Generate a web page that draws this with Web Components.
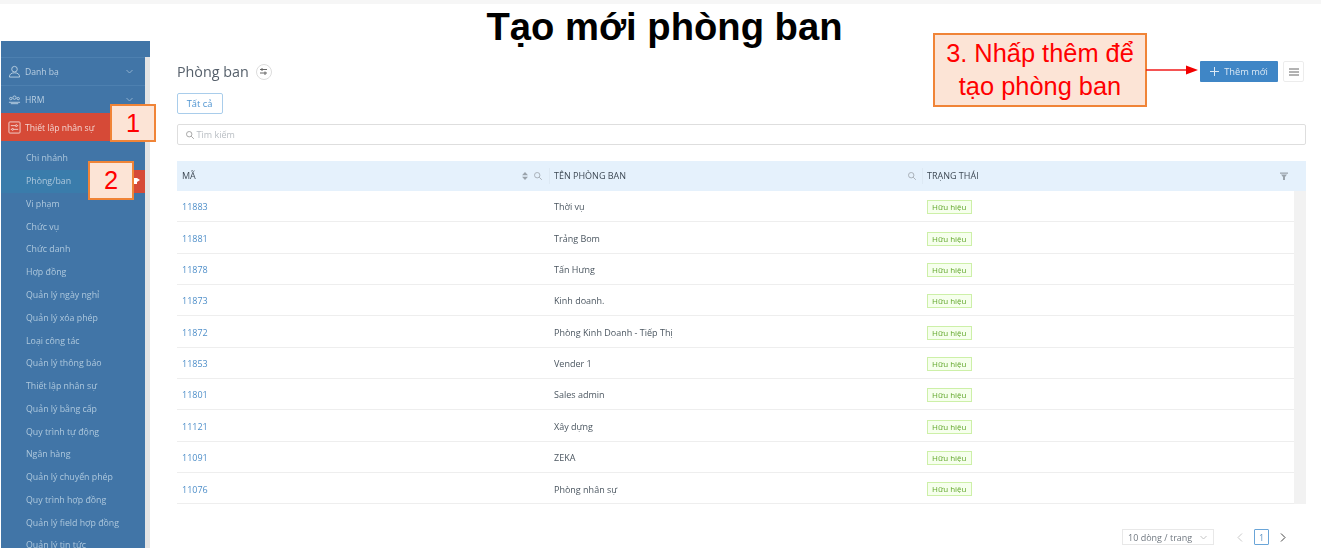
<!DOCTYPE html>
<html lang="vi">
<head>
<meta charset="utf-8">
<title>Tạo mới phòng ban</title>
<style>
    html, body { margin: 0; padding: 0; background: #fff; }
    body { width: 1321px; height: 557px; overflow: hidden; font-family: "Open Sans", "Noto Sans", sans-serif; }
</style>
</head>
<body>
<slide-page>
    <side-nav slot="nav">
        <nav-group icon="user" label="Danh bạ"></nav-group>
        <nav-group icon="team" label="HRM"></nav-group>
        <nav-group icon="sliders" label="Thiết lập nhân sự" active></nav-group>
        <nav-link>Chi nhánh</nav-link>
        <nav-link current>Phòng/ban</nav-link>
        <nav-link>Vi phạm</nav-link>
        <nav-link>Chức vụ</nav-link>
        <nav-link>Chức danh</nav-link>
        <nav-link>Hợp đồng</nav-link>
        <nav-link>Quản lý ngày nghỉ</nav-link>
        <nav-link>Quản lý xóa phép</nav-link>
        <nav-link>Loại công tác</nav-link>
        <nav-link>Quản lý thông báo</nav-link>
        <nav-link>Thiết lập nhân sự</nav-link>
        <nav-link>Quản lý bằng cấp</nav-link>
        <nav-link>Quy trình tự động</nav-link>
        <nav-link>Ngân hàng</nav-link>
        <nav-link>Quản lý chuyển phép</nav-link>
        <nav-link>Quy trình hợp đồng</nav-link>
        <nav-link>Quản lý field hợp đồng</nav-link>
        <nav-link>Quản lý tin tức</nav-link>
    </side-nav>
    <page-head></page-head>
    <search-box></search-box>
    <data-table>
        <table-row code="11883" name="Thời vụ"></table-row>
        <table-row code="11881" name="Trảng Bom"></table-row>
        <table-row code="11878" name="Tấn Hưng"></table-row>
        <table-row code="11873" name="Kinh doanh."></table-row>
        <table-row code="11872" name="Phòng Kinh Doanh - Tiếp Thị"></table-row>
        <table-row code="11853" name="Vender 1"></table-row>
        <table-row code="11801" name="Sales admin"></table-row>
        <table-row code="11121" name="Xây dựng"></table-row>
        <table-row code="11091" name="ZEKA"></table-row>
        <table-row code="11076" name="Phòng nhân sự"></table-row>
    </data-table>
    <table-pager></table-pager>

    <call-out slot="over" style="left:110px;top:104px;width:46px;height:38px">1</call-out>
    <call-out slot="over" style="left:88px;top:161px;width:46px;height:39px">2</call-out>
    <call-out slot="over" style="left:933px;top:33px;width:214px;height:74px">3. Nhấp thêm để<br>tạo phòng ban</call-out>
    <svg slot="over" style="position:absolute;left:1146px;top:62px" width="54" height="16" viewBox="0 0 54 16">
        <path d="M0 8H42" stroke="#f01a1a" stroke-width="1.4"/>
        <path d="M40 3.6L52 8L40 12.4Z" fill="#f20000"/>
    </svg>
</slide-page>

<script>
class SlidePage extends HTMLElement {
    constructor() {
        super();
        this.attachShadow({ mode: 'open' });
        this.shadowRoot.innerHTML = `
            <style>
                :host {
                    display: block;
                    position: relative;
                    width: 1321px;
                    height: 557px;
                    overflow: hidden;
                    color: #3d4a55;
                }
                h1 {
                    margin: 0;
                    height: 41px;
                    padding: 4px 0 0 8px;
                    box-sizing: border-box;
                    font: bold 38.2px/45px "Liberation Sans", Arial, sans-serif;
                    color: #000;
                    text-align: center;
                    white-space: nowrap;
                    background: linear-gradient(#f6f6f6 0 4px, #fff 4px);
                }
                .body {
                    display: flex;
                    align-items: flex-start;
                }
                .main {
                    flex: 1;
                    min-width: 0;
                    padding: 0 15px 0 26.5px;
                    filter: blur(0.3px);
                }
            </style>
            <h1>Tạo mới phòng ban</h1>
            <div class="body">
                <slot name="nav"></slot>
                <div class="main"><slot></slot></div>
            </div>
            <slot name="over"></slot>
        `;
    }
}

class SideNav extends HTMLElement {
    constructor() {
        super();
        this.attachShadow({ mode: 'open' });
        this.shadowRoot.innerHTML = `
            <style>
                :host {
                    display: flex;
                    flex: none;
                    width: 149px;
                    margin-left: 1px;
                    height: 507px;
                    flex-direction: column;
                    overflow: hidden;
                    background: linear-gradient(#4175a7 0 16px, #e4e4e4 16px);
                    font: 8.8px "Open Sans", sans-serif;
                    filter: blur(0.3px);
                }
                .top { height: 16px; flex: none; }
                .list {
                    width: 144px;
                    flex: 1;
                    min-height: 0;
                    overflow: hidden;
                    background: #4175a7;
                }
            </style>
            <div class="top"></div>
            <div class="list"><slot></slot></div>
        `;
    }
}

const NAV_ICONS = {
    user: '<circle cx="7" cy="4.5" r="3"/><path d="M1.5 13c0-3 2-4.6 5.5-4.6s5.5 1.6 5.5 4.600z"/>',
    team: '<circle cx="7" cy="5" r="1.8"/><circle cx="3" cy="6" r="1.3"/><circle cx="11" cy="6" r="1.3"/><path d="M1 10h12M3 11.5h8"/>',
    sliders: '<rect x="1" y="1" width="12" height="12" rx="1"/><path d="M3 5h5M10 5h1M3 9h1M6 9h5"/><circle cx="9" cy="5" r="1"/><circle cx="5" cy="9" r="1"/>'
};

class NavGroup extends HTMLElement {
    constructor() {
        super();
        this.attachShadow({ mode: 'open' });
    }

    connectedCallback() {
        const active = this.hasAttribute('active');
        this.shadowRoot.innerHTML = `
            <style>
                :host {
                    display: flex;
                    align-items: center;
                    height: 28px;
                    box-sizing: border-box;
                    border-top: 1px solid #4d80b0;
                    padding: 0 12px 0 7px;
                    color: #b9cfe2;
                    font-size: 8.6px;
                }
                :host([active]) {
                    background: #d64a37;
                    border-top-color: #d64a37;
                    color: #f3d5d0;
                }
                svg.icon {
                    width: 13px;
                    height: 13px;
                    margin-right: 4px;
                    flex: none;
                    fill: none;
                    stroke: currentColor;
                    stroke-width: 1;
                }
                span { flex: 1; white-space: nowrap; }
                svg.chev {
                    width: 7px;
                    height: 5px;
                    fill: none;
                    stroke: #8fb0cd;
                    stroke-width: 1;
                }
            </style>
            <svg class="icon" viewBox="0 0 14 14">${NAV_ICONS[this.getAttribute('icon')]}</svg>
            <span>${this.getAttribute('label')}</span>
            ${active ? '' : '<svg class="chev" viewBox="0 0 7 5"><path d="M.5 1l3 3 3-3"/></svg>'}
        `;
    }
}

class NavLink extends HTMLElement {
    constructor() {
        super();
        this.attachShadow({ mode: 'open' });
        this.shadowRoot.innerHTML = `
            <style>
                :host {
                    display: flex;
                    align-items: center;
                    height: 22.77px;
                    padding-left: 25px;
                    color: #aec8dd;
                    white-space: nowrap;
                }
                :host(:first-of-type) { margin-top: 6px; }
                :host([current]) {
                    background: linear-gradient(90deg, #3a7cab 0 132px, #d64a37 132px);
                    position: relative;
                }
                :host([current])::after {
                    content: "";
                    position: absolute;
                    left: 133px;
                    top: 8px;
                    width: 3px;
                    height: 6px;
                    background: #fff;
                }
                :host([current])::before {
                    content: "";
                    position: absolute;
                    left: 136px;
                    top: 8.5px;
                    border: 2.5px solid transparent;
                    border-left: 3px solid #fff;
                    border-right: 0;
                }
            </style>
            <slot></slot>
        `;
    }
}

class PageHead extends HTMLElement {
    constructor() {
        super();
        this.attachShadow({ mode: 'open' });
        this.shadowRoot.innerHTML = `
            <style>
                :host { display: block; font-family: "Open Sans", sans-serif; }
                .row {
                    display: flex;
                    align-items: center;
                    height: 21px;
                    padding-top: 20px;
                }
                h2 {
                    margin: 0;
                    padding-left: .5px;
                    font-size: 14.3px;
                    font-weight: 400;
                    color: #56606b;
                }
                .tune {
                    width: 16px;
                    height: 16px;
                    margin-left: 7px;
                    border: 1px solid #dcdcdc;
                    border-radius: 50%;
                    box-sizing: border-box;
                    display: flex;
                    align-items: center;
                    justify-content: center;
                }
                .tune svg { width: 9px; height: 9px; stroke: #666; fill: none; stroke-width: 1; }
                .add {
                    margin-left: auto;
                    width: 78px;
                    height: 21px;
                    box-sizing: border-box;
                    background: #3f86c6;
                    border-radius: 1px;
                    color: #dbe9f5;
                    font-size: 9.3px;
                    display: flex;
                    align-items: center;
                    justify-content: center;
                    gap: 5px;
                }
                .add svg { width: 9px; height: 9px; stroke: #dbe9f5; stroke-width: 1; }
                .menu {
                    width: 21px;
                    height: 21px;
                    margin: 0 2px 0 5px;
                    box-sizing: border-box;
                    border: 1px solid #ececec;
                    border-radius: 2px;
                    display: flex;
                    align-items: center;
                    justify-content: center;
                }
                .menu svg { width: 10px; height: 8px; stroke: #666; stroke-width: 1; }
                .all {
                    display: flex;
                    align-items: center;
                    justify-content: center;
                    box-sizing: border-box;
                    width: 46px;
                    height: 21px;
                    margin-top: 11px;
                    border: 1px solid #a9cdeb;
                    border-radius: 2px;
                    color: #4d93d0;
                    font-size: 9.3px;
                }
            </style>
            <div class="row">
                <h2>Phòng ban</h2>
                <span class="tune"><svg viewBox="0 0 9 9"><path d="M1 2.5h7M1 6h7M3 1v3M6 4.5V8"/></svg></span>
                <span class="add"><svg viewBox="0 0 9 9"><path d="M4.5 0v9M0 4.5h9"/></svg>Thêm mới</span>
                <span class="menu"><svg viewBox="0 0 10 8"><path d="M0 1h10M0 4h10M0 7h10"/></svg></span>
            </div>
            <div class="all">Tất cả</div>
        `;
    }
}

class SearchBox extends HTMLElement {
    constructor() {
        super();
        this.attachShadow({ mode: 'open' });
        this.shadowRoot.innerHTML = `
            <style>
                :host {
                    display: flex;
                    align-items: center;
                    height: 21px;
                    margin-top: 10px;
                    padding-left: 8px;
                    box-sizing: border-box;
                    border: 1px solid #dedede;
                    border-radius: 2px;
                    color: #b9bec3;
                    font: 9px "Open Sans", sans-serif;
                }
                svg { width: 8px; height: 8px; margin-right: 3px; fill: none; stroke: #a8a8a8; stroke-width: 1; }
            </style>
            <svg viewBox="0 0 8 8"><circle cx="3.2" cy="3.2" r="2.7"/><path d="M5.2 5.2L7.8 7.8"/></svg>
            <span>Tìm kiếm</span>
        `;
    }
}

class DataTable extends HTMLElement {
    constructor() {
        super();
        this.attachShadow({ mode: 'open' });
        this.shadowRoot.innerHTML = `
            <style>
                :host {
                    display: block;
                    margin-top: 16px;
                    font: 9px "Open Sans", sans-serif;
                }
                .head {
                    display: grid;
                    grid-template-columns: 372px 373px 1fr;
                    height: 30px;
                    background: #e5f1fc;
                    color: #3f4a55;
                }
                .cell {
                    display: flex;
                    align-items: center;
                    padding: 0 6px 1px 5.5px;
                    gap: 6px;
                    position: relative;
                }
                .cell b { font-weight: 400; flex: 1; }
                .cell svg { width: 8px; height: 8px; fill: none; stroke: #aab2ba; stroke-width: 1; }
                .cell svg.solid { fill: #9aa3ab; stroke: none; }
                .cell + .cell::before {
                    content: "";
                    position: absolute;
                    left: 0;
                    top: 7px;
                    bottom: 7px;
                    width: 1px;
                    background: #dde9f4;
                }
                .cell.first { padding-right: 7px; }
                .cell.last { padding-right: 18px; }
                .rows { display: flex; }
                .list { flex: 1; min-width: 0; }
                .bar { width: 12px; flex: none; background: #f2f2f2; }
            </style>
            <div class="head">
                <div class="cell first">
                    <b>MÃ</b>
                    <svg class="solid" viewBox="0 0 6 8" style="width:6px"><path d="M3 0l3 3.2H0zM3 8L0 4.8h6z"/></svg>
                    <svg viewBox="0 0 8 8"><circle cx="3.2" cy="3.2" r="2.7"/><path d="M5.2 5.2L7.8 7.8"/></svg>
                </div>
                <div class="cell">
                    <b>TÊN PHÒNG BAN</b>
                    <svg viewBox="0 0 8 8"><circle cx="3.2" cy="3.2" r="2.7"/><path d="M5.2 5.2L7.8 7.8"/></svg>
                </div>
                <div class="cell last">
                    <b>TRẠNG THÁI</b>
                    <svg class="solid" viewBox="0 0 8 8"><path d="M0 .5h8v1.2H0zM1 2.6h6L5 5v3H3V5z"/></svg>
                </div>
            </div>
            <div class="rows">
                <div class="list"><slot></slot></div>
                <div class="bar"></div>
            </div>
        `;
    }
}

class TableRow extends HTMLElement {
    constructor() {
        super();
        this.attachShadow({ mode: 'open' });
    }

    connectedCallback() {
        this.shadowRoot.innerHTML = `
            <style>
                :host {
                    display: grid;
                    grid-template-columns: 372px 373px 1fr;
                    align-items: center;
                    height: 31.35px;
                    padding-top: 1.5px;
                    box-sizing: border-box;
                    border-bottom: 1px solid #eeeeee;
                    font-size: 9px;
                    color: #4b5660;
                }
                div { padding-left: 5.5px; }
                .code { color: #4f8fc9; }
                .tag {
                    display: inline-block;
                    height: 14px;
                    line-height: 12px;
                    padding: 0 4px;
                    box-sizing: border-box;
                    border: 1px solid #cdf0a8;
                    background: #f6ffed;
                    color: #63a82e;
                    font-size: 8px;
                    white-space: nowrap;
                    vertical-align: middle;
                }
            </style>
            <div class="code">${this.getAttribute('code')}</div>
            <div>${this.getAttribute('name')}</div>
            <div><span class="tag">Hữu hiệu</span></div>
        `;
    }
}

class TablePager extends HTMLElement {
    constructor() {
        super();
        this.attachShadow({ mode: 'open' });
        this.shadowRoot.innerHTML = `
            <style>
                :host {
                    display: flex;
                    justify-content: flex-end;
                    align-items: center;
                    height: 16px;
                    margin-top: 25px;
                    padding-right: 20px;
                    font: 9px "Open Sans", sans-serif;
                    color: #707880;
                }
                .size {
                    display: flex;
                    align-items: center;
                    justify-content: space-between;
                    box-sizing: border-box;
                    width: 92px;
                    height: 16px;
                    padding: 0 6px 0 5px;
                    border: 1px solid #e8e8e8;
                    white-space: nowrap;
                }
                .size svg { width: 7px; height: 5px; fill: none; stroke: #c4c4c4; stroke-width: 1; }
                .arrow { width: 6px; height: 9px; fill: none; stroke-width: 1; }
                .page {
                    display: flex;
                    align-items: center;
                    justify-content: center;
                    box-sizing: border-box;
                    width: 15px;
                    height: 16px;
                    margin: 0 11px;
                    border: 1px solid #6aa5d8;
                    border-radius: 1px;
                    color: #5e94c4;
                }
            </style>
            <div class="size">10 dòng / trang<svg viewBox="0 0 7 5"><path d="M.5 1l3 3 3-3"/></svg></div>
            <svg class="arrow" viewBox="0 0 6 9" stroke="#c8c8c8" style="margin-left:23px"><path d="M5 .5l-4 4 4 4"/></svg>
            <span class="page">1</span>
            <svg class="arrow" viewBox="0 0 6 9" stroke="#444"><path d="M1 .5l4 4-4 4"/></svg>
        `;
    }
}

class CallOut extends HTMLElement {
    constructor() {
        super();
        this.attachShadow({ mode: 'open' });
        this.shadowRoot.innerHTML = `
            <style>
                :host {
                    display: flex;
                    align-items: center;
                    justify-content: center;
                    position: absolute;
                    box-sizing: border-box;
                    border: 2px solid #f08437;
                    background: #fce4d6;
                    color: #ff0000;
                    font: 25.4px/33px "Liberation Sans", Arial, sans-serif;
                    text-align: center;
                    white-space: nowrap;
                }
            </style>
            <div><slot></slot></div>
        `;
    }
}

customElements.define('slide-page', SlidePage);
customElements.define('side-nav', SideNav);
customElements.define('nav-group', NavGroup);
customElements.define('nav-link', NavLink);
customElements.define('page-head', PageHead);
customElements.define('search-box', SearchBox);
customElements.define('data-table', DataTable);
customElements.define('table-row', TableRow);
customElements.define('table-pager', TablePager);
customElements.define('call-out', CallOut);
</script>
</body>
</html>
